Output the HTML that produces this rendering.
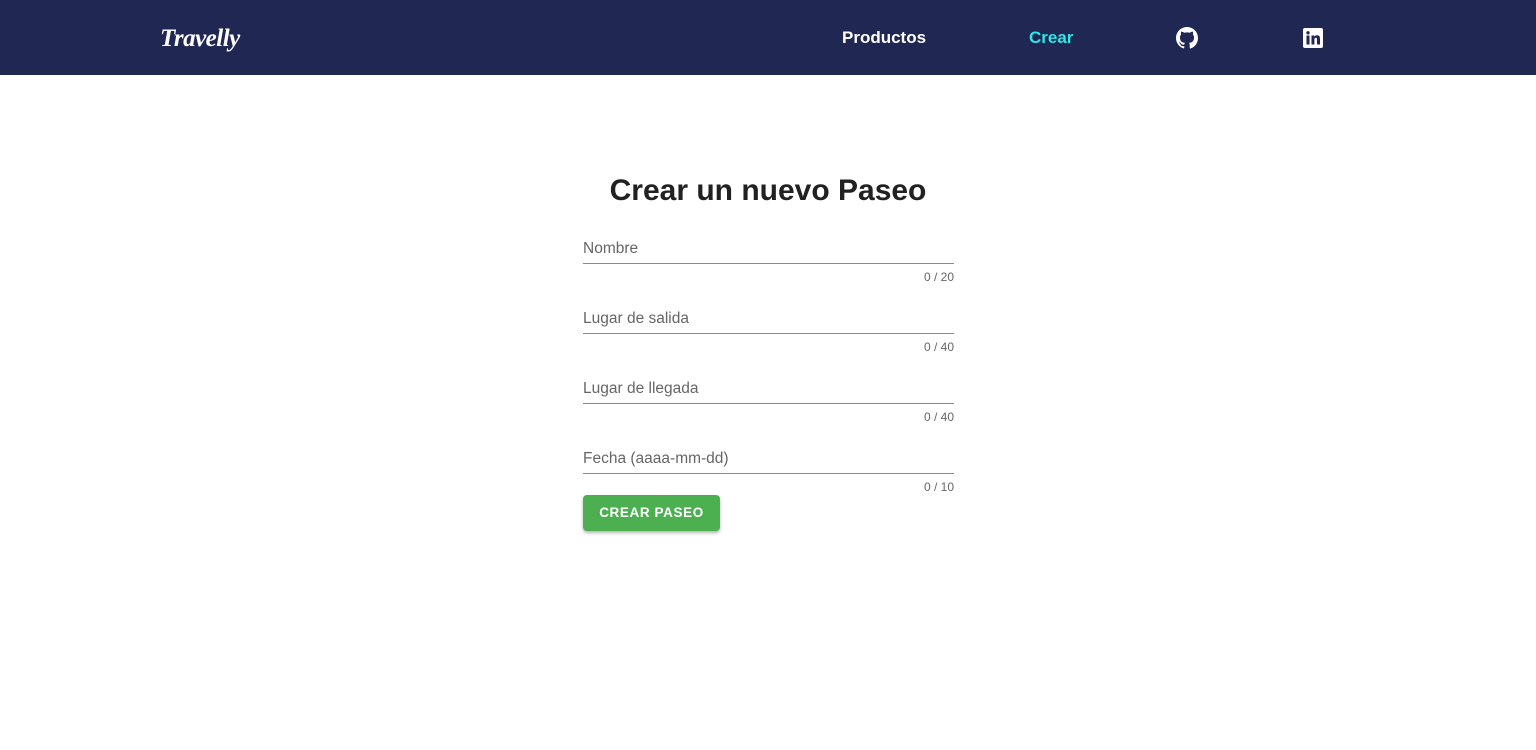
<!DOCTYPE html>
<html><head><meta charset="utf-8"><style>
*{box-sizing:border-box;margin:0;padding:0}
body{width:1536px;height:750px;background:#fff;font-family:"Liberation Sans",sans-serif;overflow:hidden}
.nav{height:75px;background:#202752;position:relative;color:#fff}
.logo{position:absolute;left:160px;top:25px;font-family:"Liberation Serif",serif;font-style:italic;font-weight:bold;font-size:25px;letter-spacing:-0.5px}
.nav a{position:absolute;top:28px;font-size:17px;font-weight:bold;color:#fff;text-decoration:none}
h1{position:absolute;top:174px;left:0;width:1536px;text-align:center;font-size:30px;font-weight:bold;color:#212121}
.f{position:absolute;left:583px;width:371px}
.f .l{font-size:15.5px;color:#666;position:absolute;top:2px}
.f .u{position:absolute;top:25px;left:0;width:371px;height:1px;background:#8a8a8a}
.f .c{position:absolute;top:32px;right:0;font-size:12px;color:#666}
.btn{position:absolute;left:583px;top:495px;width:137px;height:36px;background:#4caf50;color:#fff;border-radius:4px;font-size:13.5px;font-weight:bold;letter-spacing:0.6px;text-align:center;line-height:36px;box-shadow:0 2px 3px rgba(0,0,0,.3)}
</style></head><body>
<div class="nav">
<div class="logo">Travelly</div>
<a style="left:842px">Productos</a>
<a style="left:1029px;color:#2ee6e6">Crear</a>
<svg style="position:absolute;left:1176px;top:27px" width="22" height="22" viewBox="0 0 16 16"><path fill="#fff" d="M8 0C3.58 0 0 3.58 0 8c0 3.54 2.29 6.53 5.47 7.59.4.07.55-.17.55-.38v-1.33c-2.23.48-2.7-1.07-2.7-1.07-.36-.92-.89-1.17-.89-1.17-.73-.5.06-.49.06-.49.8.06 1.23.83 1.23.83.72 1.22 1.87.87 2.33.66.07-.52.28-.87.5-1.07-1.78-.2-3.65-.89-3.65-3.95 0-.87.31-1.59.82-2.15-.08-.2-.36-1.02.08-2.12 0 0 .67-.21 2.2.82a7.6 7.6 0 0 1 4 0c1.53-1.04 2.2-.82 2.2-.82.44 1.1.16 1.92.08 2.12.51.56.82 1.27.82 2.15 0 3.07-1.87 3.75-3.65 3.95.29.25.54.73.54 1.48v2.2c0 .21.15.46.55.38A8 8 0 0 0 16 8c0-4.42-3.58-8-8-8z"/></svg>
<svg style="position:absolute;left:1303px;top:28px" width="20" height="20" viewBox="0 0 20 20"><rect width="20" height="20" rx="2" fill="#fff"/><rect x="3.5" y="7.5" width="3" height="9" fill="#202752"/><circle cx="5" cy="4.8" r="1.7" fill="#202752"/><path fill="#202752" d="M8.5 7.5h2.8v1.3c.5-.9 1.5-1.5 2.8-1.5 2.3 0 2.9 1.5 2.9 3.6v5.6h-3v-5c0-1-.3-1.7-1.2-1.7s-1.4.7-1.4 1.7v5H8.5z"/></svg>
</div>
<h1>Crear un nuevo Paseo</h1>
<div class="f" style="top:238px"><div class="l">Nombre</div><div class="u"></div><div class="c">0 / 20</div></div>
<div class="f" style="top:308px"><div class="l">Lugar de salida</div><div class="u"></div><div class="c">0 / 40</div></div>
<div class="f" style="top:378px"><div class="l">Lugar de llegada</div><div class="u"></div><div class="c">0 / 40</div></div>
<div class="f" style="top:448px"><div class="l">Fecha (aaaa-mm-dd)</div><div class="u"></div><div class="c">0 / 10</div></div>
<div class="btn">CREAR PASEO</div>
</body></html>
